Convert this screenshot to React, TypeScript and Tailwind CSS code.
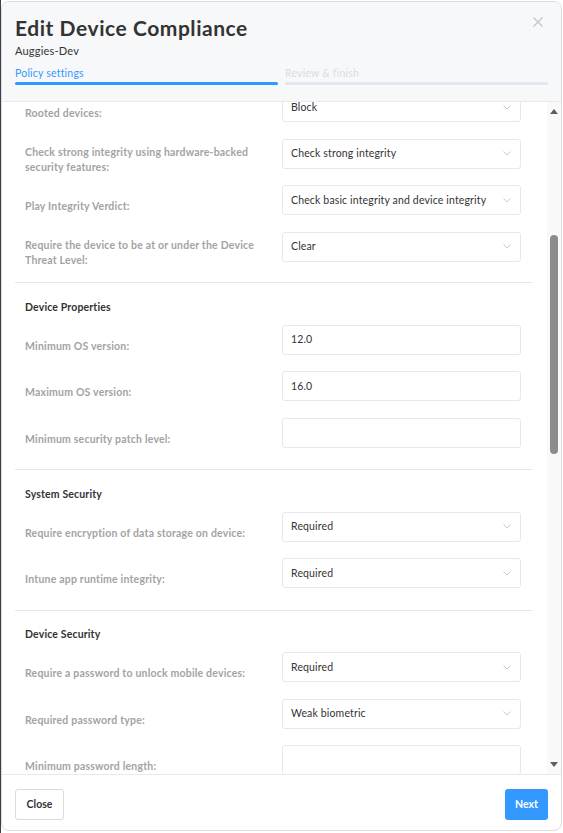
import { ReactNode } from "react";

type Field = {
  label: string;
  value?: string;
  kind: "select" | "text";
};

const sections: { title?: string; fields: Field[] }[] = [
  {
    fields: [
      { label: "Rooted devices:", value: "Block", kind: "select" },
      {
        label: "Check strong integrity using hardware-backed security features:",
        value: "Check strong integrity",
        kind: "select",
      },
      {
        label: "Play Integrity Verdict:",
        value: "Check basic integrity and device integrity",
        kind: "select",
      },
      {
        label: "Require the device to be at or under the Device Threat Level:",
        value: "Clear",
        kind: "select",
      },
    ],
  },
  {
    title: "Device Properties",
    fields: [
      { label: "Minimum OS version:", value: "12.0", kind: "text" },
      { label: "Maximum OS version:", value: "16.0", kind: "text" },
      { label: "Minimum security patch level:", kind: "text" },
    ],
  },
  {
    title: "System Security",
    fields: [
      { label: "Require encryption of data storage on device:", value: "Required", kind: "select" },
      { label: "Intune app runtime integrity:", value: "Required", kind: "select" },
    ],
  },
  {
    title: "Device Security",
    fields: [
      { label: "Require a password to unlock mobile devices:", value: "Required", kind: "select" },
      { label: "Required password type:", value: "Weak biometric", kind: "select" },
      { label: "Minimum password length:", kind: "text" },
    ],
  },
];

function Chevron() {
  return (
    <svg width="8" height="5" viewBox="0 0 8 5" fill="none">
      <path d="M0.5 0.5L4 4L7.5 0.5" stroke="#c4c4c8" strokeWidth="0.9" />
    </svg>
  );
}

function Control({ field }: { field: Field }) {
  return (
    <div className="flex h-[30px] items-center justify-between rounded-[3px] border border-[#e7e7ee] bg-white pl-2 pr-[9px] text-[10.5px] leading-none tracking-[0.15px] text-[#333]">
      <span>{field.value ?? ""}</span>
      {field.kind === "select" && <Chevron />}
    </div>
  );
}

function Row({ field }: { field: Field }) {
  return (
    <div className="grid h-[46.5px] grid-cols-[1fr_239px] pl-[10px] pr-[11px]">
      <div className="flex h-[43px] items-center pr-5 text-[10.5px] font-bold leading-[15px] tracking-[0.2px] text-[#a3a3a3]">
        {field.label}
      </div>
      <Control field={field} />
    </div>
  );
}

function Section({ title, children, first }: { title?: string; children: ReactNode; first?: boolean }) {
  return (
    <div className={first ? "pb-[4px]" : "border-t border-[#e6e6ea] pb-[5px] pt-[16.5px]"}>
      {title && (
        <div className="mb-[11px] h-[14px] pl-[10px] text-[10.5px] font-bold leading-[14px] tracking-[0.15px] text-[#333]">
          {title}
        </div>
      )}
      {children}
    </div>
  );
}

function ScrollTrack() {
  return (
    <div className="flex w-[14px] flex-col items-center bg-[#f9f9f9]">
      <svg width="8" height="5" viewBox="0 0 8 5" className="mt-[7px]">
        <path d="M4 0L8 5H0Z" fill="#5f5f5f" />
      </svg>
      <div className="mt-[121px] h-[219px] w-[8px] rounded-full bg-[#8c8c8c]" />
      <div className="flex-1" />
      <svg width="8" height="5" viewBox="0 0 8 5" className="mb-[7px]">
        <path d="M0 0H8L4 5Z" fill="#5f5f5f" />
      </svg>
    </div>
  );
}

export default function App() {
  return (
    <div className="flex h-[833px] w-[563px] bg-white font-['Lato',sans-serif]">
      <div className="w-px bg-[#3d3d4c]" />
      <div className="mb-[2px] mt-px flex w-[561px] flex-col overflow-hidden rounded-lg border border-[#dcdce0] bg-white">
        {/* header */}
        <div className="h-[100px] border-b border-[#e8e8ee] bg-[#f7f8fa] px-[13px] pt-[14px]">
          <div className="flex items-start justify-between">
            <h1 className="text-[21px] font-bold leading-6 tracking-[0.55px] text-[#333]">Edit Device Compliance</h1>
            <svg width="10" height="10" viewBox="0 0 10 10" className="mr-[5px] mt-[1px]">
              <path d="M0.5 0.5L9.5 9.5M9.5 0.5L0.5 9.5" stroke="#c4c4c8" strokeWidth="1.2" />
            </svg>
          </div>
          <div className="mt-[4px] text-[11px] leading-[14px] tracking-[0.2px] text-[#333]">Auggies-Dev</div>
          <div className="mt-[9px] grid grid-cols-2 gap-[7px]">
            <div>
              <div className="text-[10.5px] leading-3 tracking-[0.2px] text-[#3399ff]">Policy settings</div>
              <div className="mt-[3px] h-[3px] rounded-full bg-[#3399ff]" />
            </div>
            <div>
              <div className="text-[10.5px] leading-3 tracking-[0.2px] text-[#d9dce6]">Review &amp; finish</div>
              <div className="mt-[3px] h-[3px] rounded-full bg-[#e4e6ef]" />
            </div>
          </div>
        </div>

        {/* scrolling body */}
        <div className="flex flex-1 overflow-hidden">
          <div className="flex-1 overflow-hidden pl-[13px] pr-[15px]">
            <div className="-mt-[10px]">
              {sections.map((s, i) => (
                <Section key={i} title={s.title} first={i === 0}>
                  {s.fields.map((f) => (
                    <Row key={f.label} field={f} />
                  ))}
                </Section>
              ))}
            </div>
          </div>
          <ScrollTrack />
        </div>

        {/* footer */}
        <div className="flex h-[56px] items-start justify-between border-t border-[#e8e8ee] px-[13px] pt-[14px]">
          <button className="h-[31px] w-[49px] rounded-[3px] border border-[#d9d9de] bg-white text-[10.5px] font-bold text-[#333]">
            Close
          </button>
          <button className="h-[31px] w-[43px] rounded-[3px] bg-[#3399ff] text-[10.5px] font-bold text-white">
            Next
          </button>
        </div>
      </div>
    </div>
  );
}
